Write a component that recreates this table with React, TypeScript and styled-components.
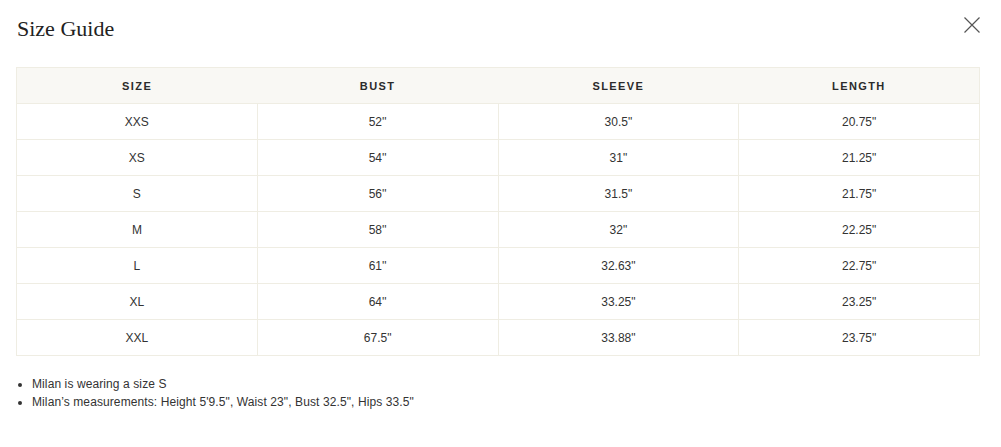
import React from 'react'
import styled, { createGlobalStyle } from 'styled-components'

const GlobalStyle = createGlobalStyle`
  body {
    margin: 0;
    background: #ffffff;
    font-family: 'Liberation Sans', Arial, sans-serif;
    color: #333333;
  }
`

const Modal = styled.div`
  padding: 13px 21px 0 16px;
`

const Header = styled.div`
  display: flex;
  align-items: flex-start;
  justify-content: space-between;
  height: 54px;
`

const Title = styled.h2`
  margin: 0;
  font-family: 'Liberation Serif', 'Times New Roman', serif;
  font-weight: 400;
  font-size: 22px;
  line-height: 31px;
  color: #222222;
  padding-left: 1px;
`

const CloseButton = styled.button`
  border: 0;
  background: none;
  padding: 0;
  margin: 4px 0 0 0;
  width: 16px;
  height: 16px;
  cursor: pointer;
  display: flex;
`

const Table = styled.table`
  width: 100%;
  border-collapse: collapse;
  border: 1px solid #efede3;
  table-layout: fixed;
`

const HeadCell = styled.th`
  background: #f9f8f4;
  height: 35px;
  padding: 0;
  font-size: 11px;
  font-weight: 700;
  letter-spacing: 1.4px;
  color: #2b2b2b;
  text-align: center;
`

const Cell = styled.td`
  height: 35px;
  padding: 0;
  border: 1px solid #efede3;
  font-size: 12px;
  color: #333333;
  text-align: center;
`

const Notes = styled.ul`
  margin: 19px 0 0;
  padding-left: 16px;
  font-size: 12px;
  line-height: 18px;
  letter-spacing: 0.1px;
  color: #333333;
`

const rows = [
  ['XXS', "52''", '30.5"', '20.75"'],
  ['XS', "54''", '31"', '21.25"'],
  ['S', "56''", '31.5"', '21.75"'],
  ['M', "58''", '32"', '22.25"'],
  ['L', "61''", '32.63"', '22.75"'],
  ['XL', "64''", '33.25"', '23.25"'],
  ['XXL', '67.5"', '33.88"', '23.75"'],
]

const App: React.FC = () => (
  <>
    <GlobalStyle />
    <Modal>
      <Header>
        <Title>Size Guide</Title>
        <CloseButton aria-label="Close">
          <svg width="16" height="16" viewBox="0 0 16 16" fill="none">
            <path d="M0.5 0.5L15.5 15.5M15.5 0.5L0.5 15.5" stroke="#555" strokeWidth="1.2" />
          </svg>
        </CloseButton>
      </Header>
      <Table>
        <thead>
          <tr>
            <HeadCell>SIZE</HeadCell>
            <HeadCell>BUST</HeadCell>
            <HeadCell>SLEEVE</HeadCell>
            <HeadCell>LENGTH</HeadCell>
          </tr>
        </thead>
        <tbody>
          {rows.map((row) => (
            <tr key={row[0]}>
              {row.map((value, i) => (
                <Cell key={i}>{value}</Cell>
              ))}
            </tr>
          ))}
        </tbody>
      </Table>
      <Notes>
        <li>Milan is wearing a size S</li>
        <li>Milan’s measurements: Height 5'9.5", Waist 23", Bust 32.5", Hips 33.5"</li>
      </Notes>
    </Modal>
  </>
)

export default App
